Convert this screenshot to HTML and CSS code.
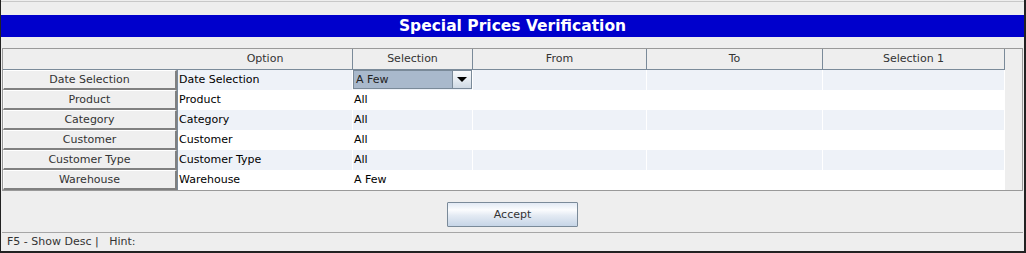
FILE: index.html
```html
<!DOCTYPE html>
<html lang="en">
<head>
    <meta charset="UTF-8">
    <title>Special Prices Verification</title>
    <link rel="stylesheet" href="styles.css">
</head>
<body>

<div class="window">
    <div class="top-strip"></div>
    <div class="title-bar">Special Prices Verification</div>
    <div class="spacer"></div>

    <div class="table-pane">
        <div class="grid-head">
            <div class="head-corner"></div>
            <div class="head-cell w-option">Option</div>
            <div class="head-cell w-selection">Selection</div>
            <div class="head-cell w-from">From</div>
            <div class="head-cell w-to">To</div>
            <div class="head-cell w-sel1">Selection 1</div>
        </div>

        <div class="grid-row alt">
            <div class="row-button">Date Selection</div>
            <div class="cells">
                <div class="cell w-option">Date Selection</div>
                <div class="cell w-selection combo-cell">
                    <div class="combo">
                        <span class="combo-text">A Few</span>
                        <span class="combo-arrow"><span class="triangle"></span></span>
                    </div>
                </div>
                <div class="cell w-from"></div>
                <div class="cell w-to"></div>
                <div class="cell w-sel1"></div>
            </div>
        </div>
        <div class="grid-row">
            <div class="row-button">Product</div>
            <div class="cells">
                <div class="cell w-option">Product</div>
                <div class="cell w-selection">All</div>
                <div class="cell w-from"></div>
                <div class="cell w-to"></div>
                <div class="cell w-sel1"></div>
            </div>
        </div>
        <div class="grid-row alt">
            <div class="row-button">Category</div>
            <div class="cells">
                <div class="cell w-option">Category</div>
                <div class="cell w-selection">All</div>
                <div class="cell w-from"></div>
                <div class="cell w-to"></div>
                <div class="cell w-sel1"></div>
            </div>
        </div>
        <div class="grid-row">
            <div class="row-button">Customer</div>
            <div class="cells">
                <div class="cell w-option">Customer</div>
                <div class="cell w-selection">All</div>
                <div class="cell w-from"></div>
                <div class="cell w-to"></div>
                <div class="cell w-sel1"></div>
            </div>
        </div>
        <div class="grid-row alt">
            <div class="row-button">Customer Type</div>
            <div class="cells">
                <div class="cell w-option">Customer Type</div>
                <div class="cell w-selection">All</div>
                <div class="cell w-from"></div>
                <div class="cell w-to"></div>
                <div class="cell w-sel1"></div>
            </div>
        </div>
        <div class="grid-row">
            <div class="row-button">Warehouse</div>
            <div class="cells">
                <div class="cell w-option">Warehouse</div>
                <div class="cell w-selection">A Few</div>
                <div class="cell w-from"></div>
                <div class="cell w-to"></div>
                <div class="cell w-sel1"></div>
            </div>
        </div>
    </div>

    <div class="button-area">
        <button class="accept" type="button">Accept</button>
    </div>

    <div class="status-bar">F5 - Show Desc |&nbsp;&nbsp;&nbsp;Hint:</div>
</div>

</body>
</html>
```

FILE: styles.css
```css
/* General */
body {
    margin: 0;
    background-color: #eeeeee;
    font-family: "DejaVu Sans", sans-serif;
    font-size: 11px;
    color: #000;
}

.window {
    width: 1026px;
    height: 253px;
    box-sizing: border-box;
    border-left: 1px solid #222;
    border-right: 2px solid #222;
    border-bottom: 2px solid #222;
    display: flex;
    flex-direction: column;
}

.top-strip {
    height: 13px;
    margin-top: 1px;
    border-top: 1px solid #c8c8c8;
}

.title-bar {
    height: 22px;
    line-height: 22px;
    background-color: #0000cc;
    color: #fff;
    text-align: center;
    font-weight: bold;
    font-size: 15.5px;
}

.spacer {
    height: 11px;
}

/* Table */
.table-pane {
    margin: 0 1px;
    height: 143px;
    box-sizing: border-box;
    border: 1px solid #999;
}

.grid-head {
    display: flex;
    width: 1002px;
    height: 21px;
    box-sizing: border-box;
    border-bottom: 1px solid #7a8a99;
}

.head-corner {
    width: 175px;
}

.head-cell {
    box-sizing: border-box;
    border-right: 1px solid #7a8a99;
    text-align: center;
    line-height: 20px;
    color: #333;
}

.w-option { width: 175px; }
.w-selection { width: 120px; }
.w-from { width: 174px; }
.w-to { width: 176px; }
.w-sel1 { width: 182px; }

.grid-row {
    display: flex;
    height: 20px;
}

.row-button {
    width: 174px;
    height: 20px;
    box-sizing: border-box;
    border-top: 1px solid #fff;
    border-left: 1px solid #f8f8f8;
    border-right: 2px solid #808080;
    border-bottom: 2px solid #808080;
    background-color: #efefef;
    text-align: center;
    line-height: 17px;
    color: #333;
}

.cells {
    display: flex;
    border-left: 1px solid #7a8a99;
    background-color: #fff;
}

.grid-row.alt .cells {
    background-color: #eef2f8;
}

.cell {
    box-sizing: border-box;
    height: 20px;
    line-height: 20px;
    padding-left: 1px;
    border-right: 1px solid #fff;
    white-space: nowrap;
    overflow: hidden;
}

.cell.combo-cell {
    padding: 0;
}

/* Combo box */
.combo {
    display: flex;
    width: 119px;
    height: 19px;
    box-sizing: border-box;
    border: 1px solid #7a8a99;
    background-color: #a9b9cc;
}

.combo-text {
    flex: 1;
    padding-left: 2px;
    line-height: 17px;
    color: #222;
}

.combo-arrow {
    width: 18px;
    border-left: 1px solid #7a8a99;
    background: linear-gradient(#f7f9fb, #e6ecf2 50%, #cfd9e4);
    display: flex;
    align-items: center;
    justify-content: center;
}

.triangle {
    width: 0;
    height: 0;
    border-left: 5px solid transparent;
    border-right: 5px solid transparent;
    border-top: 5px solid #000;
}

/* Buttons */
.button-area {
    height: 41px;
    box-sizing: border-box;
    padding-top: 11px;
    display: flex;
    justify-content: center;
}

.accept {
    width: 131px;
    height: 25px;
    padding: 0;
    border: 1px solid #7a8a99;
    border-radius: 1px;
    background: linear-gradient(#e2eaf4, #fbfcfe 30%, #e3eaf3 55%, #c6d5e7);
    font-family: "DejaVu Sans", sans-serif;
    font-size: 11px;
    color: #333;
}

/* Status bar */
.status-bar {
    height: 19px;
    box-sizing: border-box;
    margin: 0 1px;
    border-top: 1px solid #a6a6a6;
    padding-left: 5px;
    line-height: 18px;
    color: #333;
}
```
